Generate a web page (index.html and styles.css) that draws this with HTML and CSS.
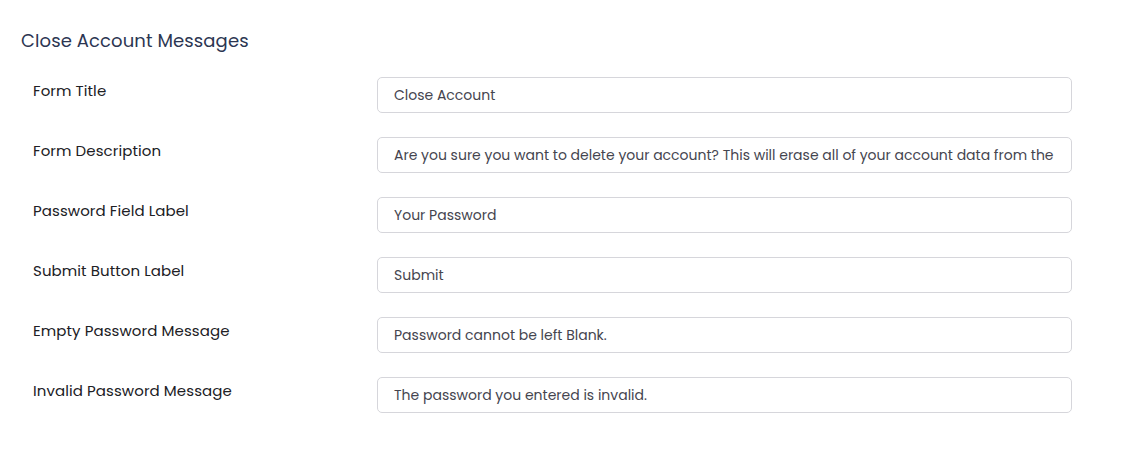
FILE: index.html
```html
<!DOCTYPE html>
<html>
<head>
<meta charset="utf-8">
<link rel="stylesheet" href="styles.css">
</head>
<body>
<div class="panel">
  <h2 class="title">Close Account Messages</h2>
  <div class="rows">
    <div class="row">
      <label class="label">Form Title</label>
      <div class="input">Close Account</div>
    </div>
    <div class="row">
      <label class="label">Form Description</label>
      <div class="input">Are you sure you want to delete your account? This will erase all of your account data from the</div>
    </div>
    <div class="row">
      <label class="label">Password Field Label</label>
      <div class="input">Your Password</div>
    </div>
    <div class="row">
      <label class="label">Submit Button Label</label>
      <div class="input">Submit</div>
    </div>
    <div class="row">
      <label class="label">Empty Password Message</label>
      <div class="input">Password cannot be left Blank.</div>
    </div>
    <div class="row">
      <label class="label">Invalid Password Message</label>
      <div class="input">The password you entered is invalid.</div>
    </div>
  </div>
</div>
</body>
</html>
```
FILE: styles.css
```css
html, body {
  margin: 0;
  padding: 0;
  background: #ffffff;
}
body {
  font-family: "Poppins", "Open Sans", "Liberation Sans", sans-serif;
}
.panel {
  padding: 28px 0 0 21px;
}
.title {
  margin: 0;
  font-size: 18px;
  font-weight: 400;
  color: #2c3652;
  line-height: 26px;
  letter-spacing: 0.1px;
}
.rows {
  margin-top: 23px;
  display: flex;
  flex-direction: column;
  gap: 24px;
  padding-left: 12px;
}
.row {
  display: flex;
  align-items: flex-start;
  height: 36px;
}
.label {
  width: 344px;
  font-size: 15px;
  color: #202024;
  line-height: 22px;
  padding-top: 3px;
  letter-spacing: 0.08px;
}
.input {
  box-sizing: border-box;
  width: 695px;
  height: 36px;
  border: 1px solid #d6d6db;
  border-radius: 5px;
  padding: 0 16px;
  font-size: 14px;
  line-height: 34px;
  color: #45454f;
  white-space: nowrap;
  overflow: hidden;
}
```
